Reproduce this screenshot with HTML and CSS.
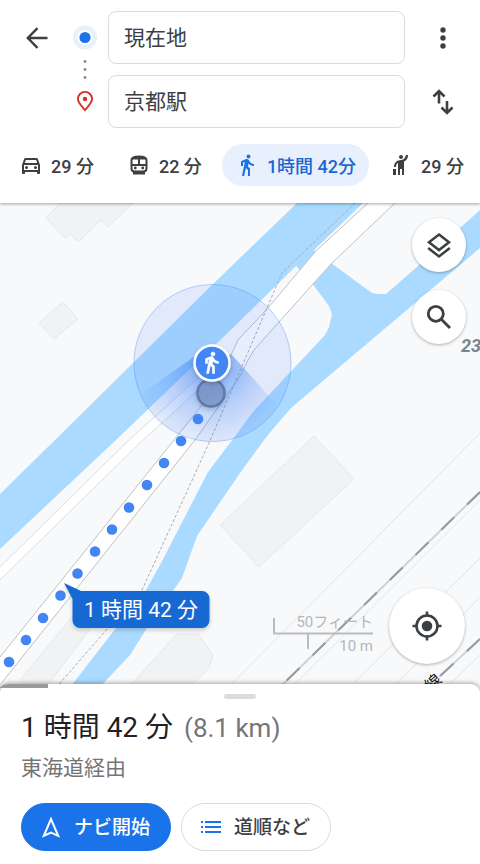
FILE: index.html
```html
<!DOCTYPE html>
<html lang="ja">
<head>
    <meta charset="UTF-8">
    <meta name="viewport" content="width=device-width, initial-scale=1.0">
    <title>京都駅</title>
    <link rel="stylesheet" href="styles.css">
</head>
<body>
    <header class="directions">
        <form class="route-form">
            <button type="button" class="icon-button back" aria-label="戻る">
                <svg width="24" height="24" viewBox="0 0 24 24" fill="none" stroke="currentColor" stroke-width="2.4">
                    <path d="M22.5 12H3M12.5 2.2L2.8 12l9.7 9.8"/>
                </svg>
            </button>
            <svg class="route-markers" width="24" height="117" viewBox="0 0 24 117" aria-hidden="true">
                <circle cx="12" cy="26.5" r="12" fill="#e8f0fe"/>
                <circle cx="12" cy="26.5" r="7.5" fill="#fff"/>
                <circle cx="12" cy="26.5" r="5.6" fill="#1a73e8"/>
                <g fill="#80868b">
                    <circle cx="12" cy="50.5" r="1.4"/>
                    <circle cx="12" cy="58.5" r="1.4"/>
                    <circle cx="12" cy="66.5" r="1.4"/>
                </g>
                <path d="M12 99C8 94.5 4.900 91.500 4.900 88a7.100 7.100 0 0 1 14.200 0c0 3.500-3.100 6.500-7.100 11z" fill="none" stroke="#d93025" stroke-width="1.900"/>
                <circle cx="12" cy="88" r="2.200" fill="#d93025"/>
            </svg>
            <input class="place origin" type="text" value="現在地" aria-label="出発地">
            <input class="place destination" type="text" value="京都駅" aria-label="目的地">
            <button type="button" class="icon-button more" aria-label="その他">
                <svg width="24" height="24" viewBox="0 0 24 24" fill="currentColor">
                    <circle cx="12" cy="4" r="2.700"/><circle cx="12" cy="12" r="2.700"/><circle cx="12" cy="20" r="2.700"/>
                </svg>
            </button>
            <button type="button" class="icon-button swap" aria-label="出発地と目的地を入れ替え">
                <svg width="24" height="28" viewBox="0 0 24 28" fill="none" stroke="currentColor" stroke-width="2.600">
                    <path d="M8 15.500V3M2.500 8.500L8 3l5.500 5.500M16 13v12M10.500 19.500L16 25l5.500-5.500"/>
                </svg>
            </button>
        </form>
        <nav class="modes">
            <button type="button" class="mode">
                <svg width="24" height="24" viewBox="0 0 24 24" fill="currentColor">
                    <path d="M18.920 6.010C18.720 5.420 18.160 5 17.500 5h-11c-.66 0-1.210.42-1.420 1.010L3 12v8c0 .55.45 1 1 1h1c.55 0 1-.45 1-1v-1h12v1c0 .55.45 1 1 1h1c.55 0 1-.45 1-1v-8l-2.080-5.990zM6.850 7h10.290l1.080 3.110H5.770L6.850 7zM19 17H5v-5h14v5z"/>
                    <circle cx="7.500" cy="14.500" r="1.500"/><circle cx="16.500" cy="14.500" r="1.500"/>
                </svg>
                29 分
            </button>
            <button type="button" class="mode">
                <svg width="24" height="24" viewBox="0 0 24 24">
                    <path d="M4.500 7c0-3 2.500-3.500 7.500-3.500s7.500.5 7.500 3.500v8.500a3 3 0 0 1-3 3h-9a3 3 0 0 1-3-3zM4.500 12h15M12 6v6" fill="none" stroke="currentColor" stroke-width="2"/>
                    <path d="M5 6.500C5 3.500 8 3 12 3s7 .5 7 3.500zM6 19h12v2.500H6z" fill="currentColor"/>
                    <circle cx="8.300" cy="15" r="1.400" fill="currentColor"/><circle cx="15.700" cy="15" r="1.400" fill="currentColor"/>
                </svg>
                22 分
            </button>
            <button type="button" class="mode selected" aria-pressed="true">
                <svg width="24" height="24" viewBox="0 0 24 24" fill="currentColor">
                    <path d="M13.500 5.500c1.100 0 2-.9 2-2s-.9-2-2-2-2 .9-2 2 .9 2 2 2zM9.800 8.900L7 23h2.100l1.800-8 2.100 2v6h2v-7.500l-2.100-2 .6-3C14.800 12 16.800 13 19 13v-2c-1.900 0-3.500-1-4.300-2.400l-1-1.600c-.4-.6-1-1-1.700-1-.3 0-.5.1-.8.1L6 8.300V13h2V9.600l1.800-.7"/>
                </svg>
                1時間 42分
            </button>
            <button type="button" class="mode">
                <svg width="24" height="24" viewBox="0 0 24 24" fill="currentColor">
                    <path d="M12 6c-1.100 0-2-.9-2-2s.9-2 2-2 2 .9 2 2-.9 2-2 2zM17 2h2c0 2.700-.93 4.410-2.300 5.500-.5.4-1.100.7-1.700.9V22h-2v-6h-2v6H9V10.100c-.3.1-.5.2-.6.3-.53.41-1.390 1.030-1.390 3.600H5c0-2.060.35-3.780 2.110-5.290C8.210 7.810 10 7 12 7s4.040-1.280 5-5zM4 16h3v6H4z"/>
                </svg>
                29 分
            </button>
        </nav>
    </header>

    <main class="map">
        <svg class="map-canvas" viewBox="0 203 480 490" preserveAspectRatio="xMinYMin slice" role="img" aria-label="地図">
            <defs>
                <radialGradient id="beam" gradientUnits="userSpaceOnUse" cx="212" cy="363" r="82">
                    <stop offset="0.150" stop-color="#4285f4" stop-opacity="0.600"/>
                    <stop offset="0.550" stop-color="#4285f4" stop-opacity="0.250"/>
                    <stop offset="1" stop-color="#4285f4" stop-opacity="0"/>
                </radialGradient>
                <filter id="soft" x="-20%" y="-20%" width="140%" height="160%">
                    <feDropShadow dx="0" dy="2" stdDeviation="2" flood-opacity="0.200"/>
                </filter>
            </defs>

            <!-- buildings -->
            <g class="building">
                <path d="M60 203L46 218l19 20 5-4 8 8 23-22 7 7 25-24z"/>
                <path d="M63 302l15 17-24 20-15-16z"/>
                <path d="M314 436l40 43-95 88-39-42z"/>
                <path d="M126 690l51-56h21l15 21-4 13-22 22z"/>
                <path d="M20 680l52-63 18 12-46 61H26z"/>
            </g>

            <!-- water -->
            <g class="water">
                <path d="M297 203h66l-49 47 4 6 13 7 41 30 6 1h8l32-28 62-56v38L291 408l-19 22-8 10-24 33-43 63-15 42-35 50-17 27-33 35H68l48-62 30-38 14-25 48-93 25-33 19-26 73-78 4-8 3-13-3-8-17-23-13-14-3-3L240 321 116 440 0 549v-55l55-54 158-156z"/>
            </g>

            <!-- roads -->
            <path d="M0 567L129 440l69-62 7 6-62 56L0 580z" fill="#fff"/>
            <path class="minor-edge" d="M0 567L129 440l69-62M0 580L143 440l62-56"/>
            <path d="M368 203l-53 49-47 56-30 32-7 15-29 50-32 40L0 657v28l195-245 45-64 8-16 6-10 25-28 34-38 19-21 63-60z" fill="#fff"/>
            <path class="edge" d="M368 203l-53 49-47 56-30 32-7 15-29 50-32 40L0 657M395 203l-63 60-19 21-34 38-25 28-6 10-8 16-45 64L0 685"/>
            <path class="footpath" d="M355 203l-73 70-15 35-25 58-33 77-67 147-34 38-54 62"/>

            <!-- railway -->
            <path class="track" d="M226 690L480 433M289 690L480 500M347 690L480 558M391 690L480 597M444 690l36-35"/>
            <path class="rail" d="M277 690L480 492M425 690l55-51"/>
            <path class="rail-dash" d="M480 492L277 690M480 639l-55 51"/>
            <text class="rail-label" transform="translate(431 692) rotate(-42)">線</text>
            <text class="road-number" x="461" y="352">23</text>

            <!-- current position -->
            <circle cx="212.500" cy="363" r="78.500" fill="#4285f4" fill-opacity="0.130" stroke="#4285f4" stroke-opacity="0.350"/>
            <path d="M202 351L137 397a78 78 0 0 0 141 9L232 355z" fill="url(#beam)"/>
            <circle cx="211" cy="393" r="13.500" fill="#7892c6" fill-opacity="0.800" stroke="#5d7aa8" stroke-width="2.500" filter="url(#soft)"/>

            <g class="route-dots">
                <circle cx="198" cy="419" r="5.300"/>
                <circle cx="181" cy="441" r="5.300"/>
                <circle cx="164" cy="463" r="5.300"/>
                <circle cx="147" cy="485" r="5.300"/>
                <circle cx="129" cy="507.500" r="5.300"/>
                <circle cx="112" cy="529.500" r="5.300"/>
                <circle cx="95" cy="551.500" r="5.300"/>
                <circle cx="77.500" cy="573.500" r="5.300"/>
                <circle cx="60.500" cy="595.500" r="5.300"/>
                <circle cx="43" cy="618" r="5.300"/>
                <circle cx="26" cy="640" r="5.300"/>
                <circle cx="9" cy="662" r="5.300"/>
            </g>

            <circle cx="212" cy="363" r="17.500" fill="#4285f4" stroke="#fff" stroke-width="2.600" filter="url(#soft)"/>
            <path transform="translate(199.500 350.500)" d="M13.500 5.500c1.100 0 2-.9 2-2s-.9-2-2-2-2 .9-2 2 .9 2 2 2zM9.800 8.900L7 23h2.100l1.800-8 2.100 2v6h2v-7.500l-2.100-2 .6-3C14.800 12 16.800 13 19 13v-2c-1.900 0-3.500-1-4.300-2.400l-1-1.600c-.4-.6-1-1-1.700-1-.3 0-.5.1-.8.1L6 8.300V13h2V9.600l1.800-.7" fill="#fff" stroke="#fff" stroke-width="0.600"/>

            <!-- duration callout -->
            <path d="M64 583l17 8h121a7.500 7.500 0 0 1 7.500 7.500v22a7.500 7.500 0 0 1-7.500 7.500H80a7.500 7.500 0 0 1-7.500-7.500V599z" fill="#1967d2" filter="url(#soft)"/>
            <text class="callout-text" x="141" y="617">1 時間 42 分</text>

            <!-- scale -->
            <path d="M274 618v15.500h99M308 634v15" fill="none" stroke="#b9bbbd" stroke-width="2"/>
            <text class="scale-text" x="373" y="627">50フィート</text>
            <text class="scale-text" x="373" y="651">10 m</text>
        </svg>
        <div class="map-tools">
            <button type="button" class="fab" aria-label="レイヤ">
                <svg width="26" height="28" viewBox="0 0 26 28" fill="none" stroke="currentColor" stroke-width="2.500">
                    <path d="M13 3.500l10 7.800-10 7.800-10-7.800zM2.200 17L13 25.500 23.800 17"/>
                </svg>
            </button>
            <button type="button" class="fab" aria-label="検索">
                <svg width="26" height="26" viewBox="0 0 26 26" fill="none" stroke="currentColor" stroke-width="2.800">
                    <circle cx="9.800" cy="9.800" r="7.500"/><path d="M15 15l9 9"/>
                </svg>
            </button>
        </div>
        <button type="button" class="fab locate" aria-label="現在地を表示">
            <svg width="30" height="30" viewBox="0 0 30 30" fill="none" stroke="currentColor" stroke-width="2.600">
                <circle cx="15" cy="15" r="10.500"/><circle cx="15" cy="15" r="5.300" fill="currentColor" stroke="none"/>
                <path d="M15 .5v5M15 24.500v5M.5 15h5M24.500 15h5"/>
            </svg>
        </button>
    </main>

    <section class="sheet">
        <div class="handle"></div>
        <h1 class="duration">1 時間 42 分 <span class="distance">(8.1 km)</span></h1>
        <p class="via">東海道経由</p>
        <div class="actions">
            <button type="button" class="action primary">
                <svg width="24" height="24" viewBox="0 0 24 24" fill="none" stroke="currentColor" stroke-width="2">
                    <path d="M12 4L4.800 20.800 12 17.600l7.200 3.200z"/>
                </svg>
                <span class="action-label">ナビ開始</span>
            </button>
            <button type="button" class="action">
                <svg width="24" height="24" viewBox="0 0 24 24" fill="#1a73e8">
                    <path d="M2 6h2v2H2zM6 6h16v2H6zM2 11h2v2H2zM6 11h16v2H6zM2 16h2v2H2zM6 16h16v2H6z"/>
                </svg>
                <span class="action-label">道順など</span>
            </button>
        </div>
    </section>
</body>
</html>
```

FILE: styles.css
```css
* {
    box-sizing: border-box;
}

body {
    display: flex;
    flex-direction: column;
    min-height: 100vh;
    margin: 0;
    background-color: #fff;
    color: #3c4043;
    font-family: Roboto, "Noto Sans CJK JP", sans-serif;
}

button, input {
    font-family: inherit;
    color: inherit;
}

button {
    padding: 0;
    border: none;
    background: none;
    cursor: pointer;
}

svg {
    display: block;
    flex-shrink: 0;
}

/* Search header */
.directions {
    position: relative;
    z-index: 1;
    padding: 11px 0 17px;
    background-color: #fff;
    box-shadow: 0 1px 3px rgba(0, 0, 0, 0.35);
}

.route-form {
    display: grid;
    grid-template-columns: 73px 24px 1fr 75px;
    grid-template-rows: 53px 53px;
    row-gap: 11px;
}

.icon-button {
    display: flex;
    align-items: center;
    justify-content: center;
}

.back {
    grid-area: 1 / 1;
}

.route-markers {
    grid-area: 1 / 2 / 3 / 3;
}

.place {
    min-width: 0;
    margin: 0 0 0 11px;
    padding: 0 15px 3px;
    border: 1px solid #dadce0;
    border-radius: 8px;
    background-color: #fff;
    font-size: 21px;
}

.origin {
    grid-area: 1 / 3;
}

.destination {
    grid-area: 2 / 3;
}

.more {
    grid-area: 1 / 4;
}

.swap {
    grid-area: 2 / 4;
}

.modes {
    display: flex;
    gap: 7px;
    margin-top: 16px;
    padding-left: 6px;
}

.mode {
    display: flex;
    align-items: center;
    gap: 8px;
    height: 42px;
    padding: 0 13px;
    border-radius: 21px;
    font-size: 18px;
    font-weight: 500;
    white-space: nowrap;
}

.mode.selected {
    background-color: #e8f0fe;
    color: #1967d2;
}

.mode.selected svg {
    color: #1a73e8;
}

/* Map */
.map {
    position: relative;
    display: flex;
    flex: 1;
    margin-bottom: -9px;
    background-color: #f8f9fb;
}

.map-canvas {
    flex: 1;
    min-width: 0;
}

.building {
    fill: #f1f2f4;
    stroke: #e6e7e9;
}

.water {
    fill: #aadaff;
}

.edge, .minor-edge, .footpath, .track, .rail, .rail-dash {
    fill: none;
    stroke: #bfc0c2;
}

.minor-edge {
    stroke: #dcdde0;
}

.footpath {
    stroke: #a9abae;
    stroke-dasharray: 3 2;
}

.track {
    stroke: #e3e4e6;
}

.rail {
    stroke: #d0d1d3;
    stroke-width: 2;
}

.rail-dash {
    stroke: #97999b;
    stroke-width: 2;
    stroke-dasharray: 18 18;
}

.rail-label {
    fill: #111;
    stroke: #fff;
    stroke-width: 2;
    paint-order: stroke;
    font-size: 16px;
}

.road-number {
    fill: #7b838e;
    font-size: 18px;
    font-style: italic;
    font-weight: 700;
}

.route-dots {
    fill: #4285f4;
}

.callout-text {
    fill: #fff;
    font-size: 21px;
    text-anchor: middle;
}

.scale-text {
    fill: #b4b6b8;
    font-size: 15px;
    text-anchor: end;
}

.map-tools {
    position: absolute;
    top: 15px;
    right: 14px;
    display: flex;
    flex-direction: column;
    gap: 18px;
}

.fab {
    display: flex;
    align-items: center;
    justify-content: center;
    width: 54px;
    height: 54px;
    border-radius: 50%;
    background-color: #fff;
    box-shadow: 0 1px 3px rgba(0, 0, 0, 0.3);
}

.locate {
    position: absolute;
    right: 15px;
    bottom: 29px;
    width: 76px;
    height: 76px;
}

/* Bottom sheet */
.sheet {
    position: relative;
    padding: 10px 21px 13px;
    border-radius: 9px 9px 0 0;
    background-color: #fff;
    box-shadow: 0 -1px 4px rgba(0, 0, 0, 0.35);
}

.sheet::before {
    content: "";
    position: absolute;
    top: 0;
    left: 0;
    width: 48px;
    height: 4px;
    border-top-left-radius: 9px 4px;
    background-color: #9a9a9a;
}

.handle {
    width: 32px;
    height: 5px;
    margin: 0 auto;
    border-radius: 3px;
    background-color: #dadce0;
}

.duration {
    margin: 9px 0 0;
    color: #202124;
    font-size: 28px;
    font-weight: 400;
    line-height: 40px;
}

.distance {
    margin-left: 4px;
    color: #757575;
    font-size: 26px;
}

.via {
    margin: 5px 0 0;
    color: #757575;
    font-size: 21px;
    line-height: 30px;
}

.actions {
    display: flex;
    gap: 10px;
    margin-top: 20px;
}

.action {
    display: flex;
    align-items: center;
    gap: 11px;
    height: 48px;
    padding: 0 20px 0 17px;
    border: 1px solid #dadce0;
    border-radius: 24px;
    font-size: 19px;
    font-weight: 500;
    white-space: nowrap;
}

.action-label {
    padding-bottom: 3px;
}

.primary {
    border-color: #1a73e8;
    background-color: #1a73e8;
    color: #fff;
}
```
